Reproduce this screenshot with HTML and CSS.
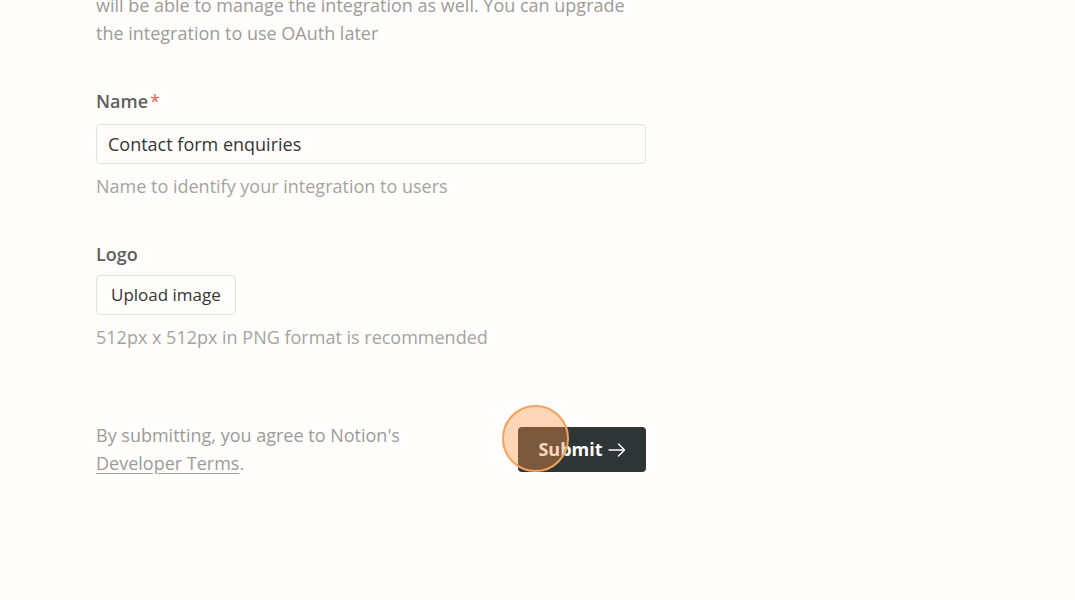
FILE: index.html
```html
<!DOCTYPE html>
<html>
<head>
<meta charset="utf-8">
<link rel="stylesheet" href="styles.css">
</head>
<body>
<main class="form">
  <p class="desc">will be able to manage the integration as well. You can upgrade the integration to use OAuth later</p>

  <section class="field field-name">
    <label class="label">Name<span class="req">*</span></label>
    <div class="input">Contact form enquiries</div>
    <p class="help">Name to identify your integration to users</p>
  </section>

  <section class="field field-logo">
    <label class="label">Logo</label>
    <div><button class="upload">Upload image</button></div>
    <p class="help">512px x 512px in PNG format is recommended</p>
  </section>

  <footer class="footer">
    <p class="terms">By submitting, you agree to Notion's <a class="link">Developer Terms</a>.</p>
    <div class="submit-wrap">
      <button class="submit">Submit<svg class="arrow" width="18" height="14" viewBox="0 0 18 14"><path d="M1 7H16.5M10.5 1L16.5 7L10.5 13" fill="none" stroke="#ffffff" stroke-width="1.4" stroke-linecap="round" stroke-linejoin="round"/></svg></button>
      <span class="click"></span>
    </div>
  </footer>
</main>
</body>
</html>
```

FILE: styles.css
```css
html, body {
  margin: 0;
  padding: 0;
  background: #fffefc;
  height: 100%;
  overflow: hidden;
}
body {
  font-family: "Open Sans", "Noto Sans", sans-serif;
  font-size: 18px;
  line-height: 28px;
  color: #37352f;
}
.form {
  width: 550px;
  margin-left: 96px;
  display: flex;
  flex-direction: column;
}
p { margin: 0; }
.desc {
  margin-top: -9px;
  color: #9d9b97;
}
.field {
  display: flex;
  flex-direction: column;
}
.field-name { margin-top: 40px; }
.field-logo { margin-top: 40px; }
.label {
  font-weight: 600;
  color: #5f5e5b;
}
.req { color: #e16259; margin-left: 2px; font-weight: 400; }
.field-name .label { margin-bottom: 9px; }
.field-logo .label { margin-bottom: 7px; }
.input {
  box-sizing: border-box;
  height: 40px;
  border: 1px solid #e3e2e0;
  border-radius: 4px;
  padding: 0 11px;
  display: flex;
  align-items: center;
  background: #fffefc;
  color: #37352f;
}
.help {
  margin-top: 8px;
  color: #a6a39e;
}
.upload {
  box-sizing: border-box;
  height: 40px;
  padding: 0 14px;
  border: 1px solid #e3e2e0;
  border-radius: 4px;
  background: #fffefc;
  font: inherit;
  font-size: 17px;
  color: #37352f;
  cursor: pointer;
}
.footer {
  margin-top: 70px;
  display: flex;
  justify-content: space-between;
  align-items: center;
}
.terms {
  width: 320px;
  color: #9d9b97;
}
.link {
  color: #9d9b97;
  text-decoration: underline;
  text-underline-offset: 3px;
}
.submit-wrap {
  position: relative;
}
.submit {
  box-sizing: border-box;
  width: 128px;
  height: 45px;
  border: none;
  border-radius: 4px;
  background: #2f3437;
  color: #ffffff;
  font: inherit;
  font-weight: 700;
  font-size: 18px;
  display: flex;
  align-items: center;
  justify-content: center;
  gap: 5px;
}
.arrow { display: block; margin-top: 1px; }
.click {
  position: absolute;
  left: -16px;
  top: -22px;
  width: 63px;
  height: 63px;
  border-radius: 50%;
  border: 2px solid #f5a25a;
  background: rgba(250, 150, 70, 0.38);
  pointer-events: none;
}
```
